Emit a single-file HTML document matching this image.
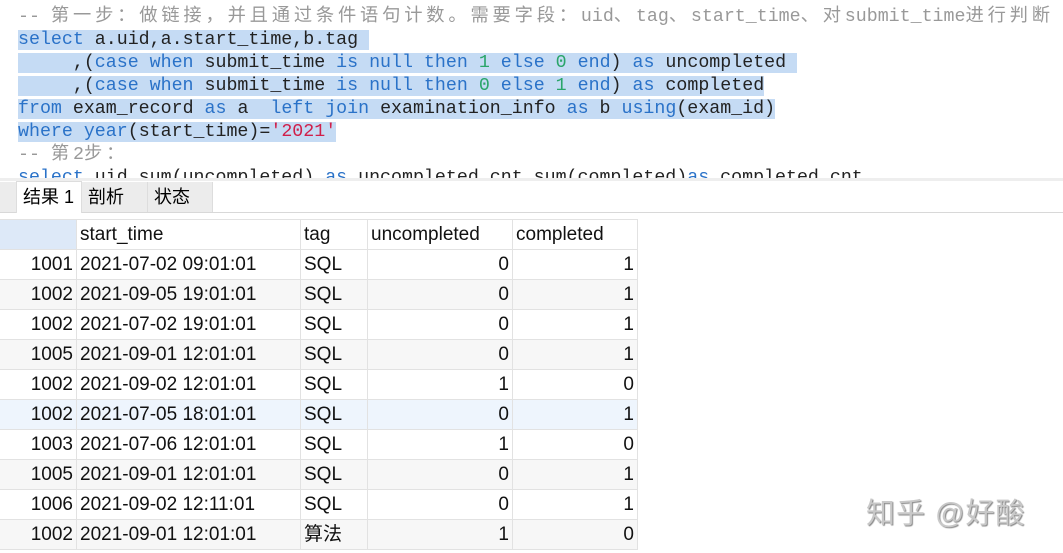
<!DOCTYPE html><html><head><meta charset="utf-8"><style>
body{margin:0;width:1063px;height:553px;overflow:hidden;background:#fff;position:relative;font-family:"Liberation Sans","Noto Sans CJK SC",sans-serif}
.code{position:absolute;left:18px;top:6px;font-family:"Liberation Mono","Noto Sans CJK SC",monospace;font-size:18.3px;line-height:23px;white-space:pre;color:#222}
.code div{height:23px}
.h{background:#c5dbf4}
.k{color:#2a72c8}.c{color:#999}.n{color:#2aa56a}.s{color:#d0204a}
.z{letter-spacing:3.8px}
.codewrap{position:absolute;left:0;top:0;width:1063px;height:178px;overflow:hidden}
.sep{position:absolute;left:0;top:178px;width:1063px;height:3px;background:#eee}
.tabs{position:absolute;left:0;top:181px;width:1063px;height:31px;border-bottom:1px solid #d8d8d8}
.tab{position:absolute;top:1px;height:30px;background:#ececec;font-size:18px;line-height:30px;padding-left:6px;box-sizing:border-box;border-right:1px solid #ddd}
table{position:absolute;left:-1px;top:219px;border-collapse:collapse;font-size:19px;color:#111}
td{height:29px;border:1px solid #e2e2e2;padding:0 3px;white-space:nowrap;line-height:29px}
td.r{text-align:right}
tr.g td{background:#f7f7f7}
tr.sel td{background:#eef5fd}
.wm{position:absolute;left:866px;top:490px;font-size:29px;color:#c8c8c8;text-shadow:1px 1px 1px #888;letter-spacing:1px}
</style></head><body>
<div class="codewrap"><div class="code"><div><span class="c">-- <span class="z">第一步：做链接，并且通过条件语句计数。需要字段：</span>uid<span class="z">、</span>tag<span class="z">、</span>start_time<span class="z">、对</span>submit_time<span class="z">进行判断</span></span></div><div><span class="h"><span class="k">select</span> a.uid,a.start_time,b.tag </span></div><div><span class="h">     ,(<span class="k">case when</span> submit_time <span class="k">is null then</span> <span class="n">1</span> <span class="k">else</span> <span class="n">0</span> <span class="k">end</span>) <span class="k">as</span> uncompleted </span></div><div><span class="h">     ,(<span class="k">case when</span> submit_time <span class="k">is null then</span> <span class="n">0</span> <span class="k">else</span> <span class="n">1</span> <span class="k">end</span>) <span class="k">as</span> completed</span></div><div><span class="h"><span class="k">from</span> exam_record <span class="k">as</span> a  <span class="k">left join</span> examination_info <span class="k">as</span> b <span class="k">using</span>(exam_id)</span></div><div><span class="h"><span class="k">where year</span>(start_time)=<span class="s">'2021'</span></span></div><div><span class="c">-- <span class="z">第</span>2<span class="z">步：</span></span></div><div><span class="k">select</span> uid,sum(uncompleted) <span class="k">as</span> uncompleted_cnt,sum(completed)<span class="k">as</span> completed_cnt</div></div></div>
<div class="sep"></div>
<div class="tabs">
<div class="tab" style="left:0;width:16px;background:#ececec;border:none"></div>
<div class="tab" style="left:16px;width:66px;background:#fff;top:0;height:32px;border:1px solid #ddd;border-bottom:none">结果 1</div>
<div class="tab" style="left:82px;width:66px">剖析</div>
<div class="tab" style="left:148px;width:65px">状态</div>
</div>
<table>
<tr><td style="width:70px;background:#dde9f8"></td><td style="width:217px">start_time</td><td style="width:60px">tag</td><td style="width:138px">uncompleted</td><td style="width:118px">completed</td></tr>
<tr><td class="r">1001</td><td>2021-07-02 09:01:01</td><td>SQL</td><td class="r">0</td><td class="r">1</td></tr>
<tr class="g"><td class="r">1002</td><td>2021-09-05 19:01:01</td><td>SQL</td><td class="r">0</td><td class="r">1</td></tr>
<tr><td class="r">1002</td><td>2021-07-02 19:01:01</td><td>SQL</td><td class="r">0</td><td class="r">1</td></tr>
<tr class="g"><td class="r">1005</td><td>2021-09-01 12:01:01</td><td>SQL</td><td class="r">0</td><td class="r">1</td></tr>
<tr><td class="r">1002</td><td>2021-09-02 12:01:01</td><td>SQL</td><td class="r">1</td><td class="r">0</td></tr>
<tr class="sel"><td class="r">1002</td><td>2021-07-05 18:01:01</td><td>SQL</td><td class="r">0</td><td class="r">1</td></tr>
<tr><td class="r">1003</td><td>2021-07-06 12:01:01</td><td>SQL</td><td class="r">1</td><td class="r">0</td></tr>
<tr class="g"><td class="r">1005</td><td>2021-09-01 12:01:01</td><td>SQL</td><td class="r">0</td><td class="r">1</td></tr>
<tr><td class="r">1006</td><td>2021-09-02 12:11:01</td><td>SQL</td><td class="r">0</td><td class="r">1</td></tr>
<tr class="g"><td class="r">1002</td><td>2021-09-01 12:01:01</td><td>算法</td><td class="r">1</td><td class="r">0</td></tr>
</table>
<div class="wm">知乎 @好酸</div>
</body></html>
